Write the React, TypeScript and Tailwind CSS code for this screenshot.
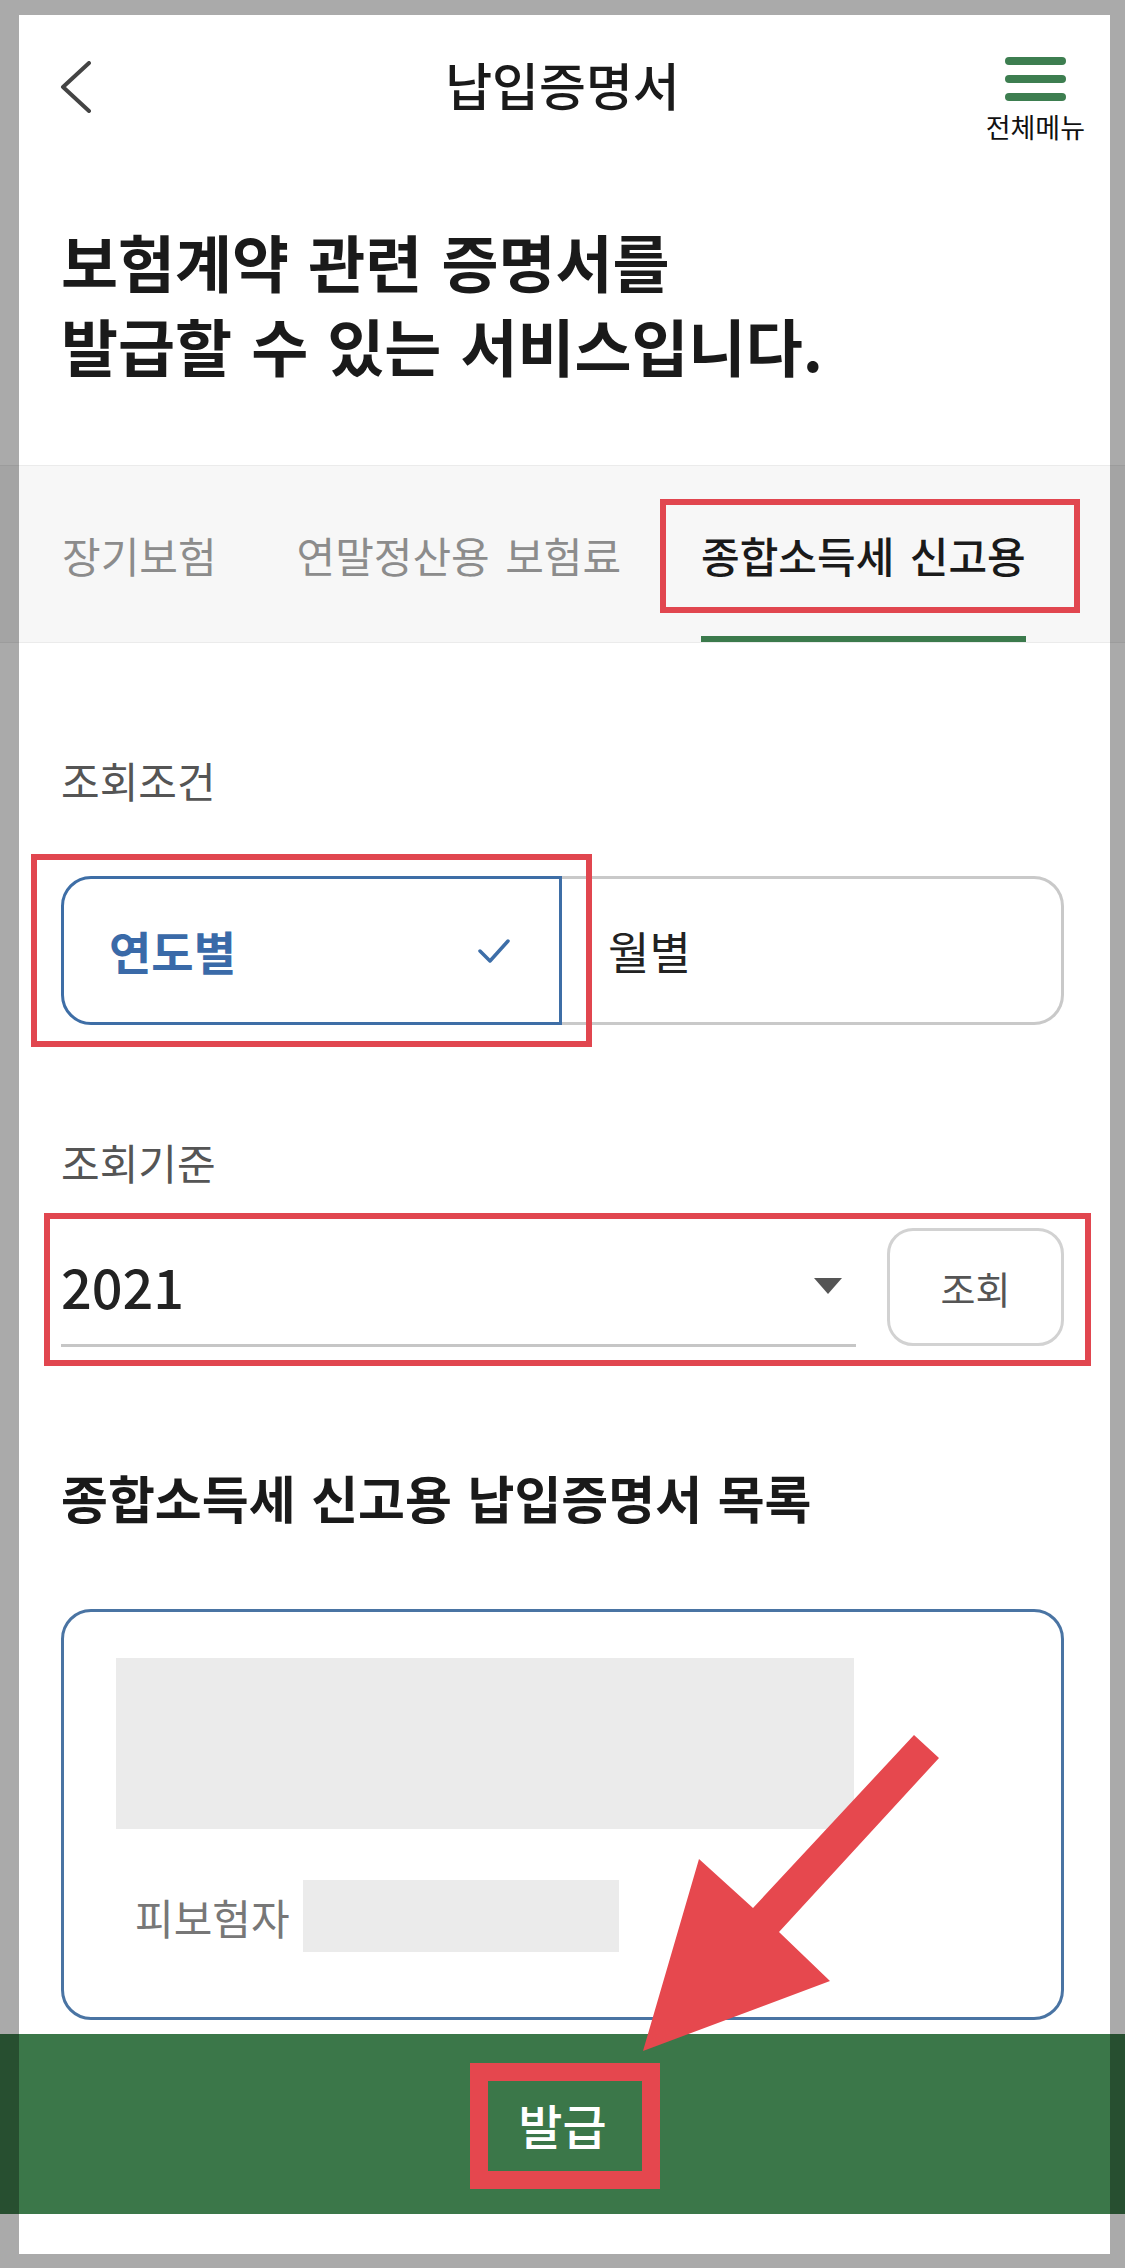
export default function App() {
  return (
    <div className="relative w-[1125px] h-[2268px] bg-white overflow-hidden font-['Noto_Sans_CJK_KR','Noto_Sans',sans-serif] text-[#1a1a1a]">
      {/* Header */}
      <header className="grid grid-cols-[1fr_auto_1fr] h-[219px]">
        <div className="pl-[60px] pt-[61px]">
          <svg width="32" height="52" viewBox="0 0 32 52">
            <polyline points="29,2 3,26 29,50" fill="none" stroke="#444" strokeWidth="4" strokeLinecap="round" strokeLinejoin="round" />
          </svg>
        </div>
        <h1 className="pt-[59px] text-[51px] leading-[50px] font-medium">납입증명서</h1>
        <div className="justify-self-end pr-[40px] pt-[57px] flex flex-col items-center">
          <div className="flex flex-col gap-[10px] w-[61px]">
            <span className="block h-[8px] rounded-full bg-[#3d7e50]" />
            <span className="block h-[8px] rounded-full bg-[#3d7e50]" />
            <span className="block h-[8px] rounded-full bg-[#3d7e50]" />
          </div>
          <span className="mt-[13px] text-[27px] leading-[26px] text-[#111]">전체메뉴</span>
        </div>
      </header>

      {/* Intro heading */}
      <h2 className="pl-[61px] text-[62px] leading-[84px] font-bold [word-spacing:5px] text-[#1a1a1a]">
        보험계약 관련 증명서를
        <br />
        발급할 수 있는 서비스입니다.
      </h2>

      {/* Tabs */}
      <nav className="mt-[78px] h-[178px] bg-[#f7f7f7] border-y border-[#ebebeb] flex pl-[62px] gap-[80px] text-[42px] [word-spacing:6px]">
        <div className="flex items-center text-[#8c8c8c]">장기보험</div>
        <div className="flex items-center text-[#8c8c8c]">연말정산용 보험료</div>
        <div className="flex items-center border-b-[6px] border-[#3b7a4c] pt-[6px] font-medium text-[#1a1a1a]">종합소득세 신고용</div>
      </nav>

      <main className="px-[61px]">
        <div className="mt-[117px] text-[42px] leading-[40px] text-[#555]">조회조건</div>

        <div className="mt-[76px] flex h-[149px]">
          <div className="w-[501px] flex items-center justify-between pl-[45px] pr-[48px] border-[3px] border-[#3e6ea6] rounded-l-[30px] text-[#3a6aa8] font-bold text-[46px]">
            <span>연도별</span>
            <svg width="34" height="26" viewBox="0 0 34 26">
              <polyline points="3,13 13,23 31,3" fill="none" stroke="#3d6ea8" strokeWidth="3.5" strokeLinecap="round" strokeLinejoin="round" />
            </svg>
          </div>
          <div className="flex-1 flex items-center pl-[46px] border-[3px] border-l-0 border-[#c9c9c9] rounded-r-[30px] text-[45px] text-[#222]">
            월별
          </div>
        </div>

        <div className="mt-[117px] text-[42px] leading-[40px] text-[#555]">조회기준</div>

        <div className="mt-[46px] flex items-end gap-[31px]">
          <div className="flex-1 h-[119px] border-b-[3px] border-[#c6c6c6] flex items-center justify-between pr-[14px]">
            <span className="text-[54px] leading-[54px] font-medium text-[#222]">2021</span>
            <svg width="28" height="16" viewBox="0 0 28 16">
              <polygon points="0,0 28,0 14,16" fill="#555" />
            </svg>
          </div>
          <button className="mb-[1px] w-[177px] h-[118px] border-[3px] border-[#d2d2d2] rounded-[26px] text-[38px] text-[#555]">
            조회
          </button>
        </div>

        <h3 className="mt-[124px] text-[51px] leading-[52px] font-bold [word-spacing:4px] text-[#1a1a1a]">
          종합소득세 신고용 납입증명서 목록
        </h3>

        <div className="mt-[86px] h-[411px] border-[3px] border-[#4a74a3] rounded-[30px] pl-[52px] pt-[46px]">
          <div className="w-[738px] h-[171px] bg-[#ebebeb]" />
          <div className="mt-[51px] flex items-center">
            <span className="ml-[19px] text-[42px] text-[#777]">피보험자</span>
            <div className="ml-[13px] w-[316px] h-[72px] bg-[#ebebeb]" />
          </div>
        </div>
      </main>

      {/* Bottom action bar */}
      <div className="mt-[14px] h-[180px] bg-[#3b7749] flex items-center justify-center">
        <span className="text-[48px] leading-[46px] font-medium text-white">발급</span>
      </div>

      {/* Annotation overlays */}
      <div className="absolute left-[660px] top-[499px] w-[420px] h-[114px] border-[6px] border-[#e1464f]" />
      <div className="absolute left-[31px] top-[854px] w-[561px] h-[193px] border-[6px] border-[#e1464f]" />
      <div className="absolute left-[44px] top-[1213px] w-[1047px] h-[153px] border-[6px] border-[#e1464f]" />
      <div className="absolute left-[470px] top-[2063px] w-[190px] h-[126px] border-[18px] border-[#e5474e]" />
      <svg className="absolute left-[640px] top-[1730px]" width="305" height="325" viewBox="0 0 305 325">
        <polygon points="274,5 299,28 139,202 190,251 3,321 59,129 113,178" fill="#e6484e" />
      </svg>

      {/* Screenshot frame overlay */}
      <div className="pointer-events-none absolute inset-0 border-solid border-t-[15px] border-r-[15px] border-b-[14px] border-l-[19px] border-[rgba(0,0,0,0.333)]" />
    </div>
  );
}
